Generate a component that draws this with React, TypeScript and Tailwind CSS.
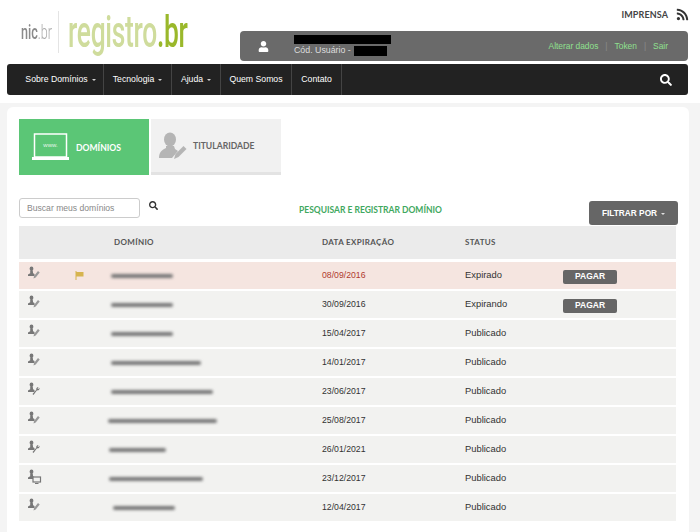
import React from 'react';
import { FaRss, FaSearch, FaUser } from 'react-icons/fa';

const menu = [
  { label: 'Sobre Domínios', caret: true, w: 'w-[97px] pl-[11px]' },
  { label: 'Tecnologia', caret: true, w: 'w-[68px]' },
  { label: 'Ajuda', caret: true, w: 'w-[49px]' },
  { label: 'Quem Somos', caret: false, w: 'w-[71px]' },
  { label: 'Contato', caret: false, w: 'w-[50px]' },
];

type Row = {
  date: string;
  status: string;
  blur: number;
  start: number;
  icon: 'pencil' | 'wrench' | 'screen';
  expired?: boolean;
  pay?: boolean;
};

const rows: Row[] = [
  { date: '08/09/2016', status: 'Expirado', blur: 62, start: -3, icon: 'pencil', expired: true, pay: true },
  { date: '30/09/2016', status: 'Expirando', blur: 62, start: -3, icon: 'pencil', pay: true },
  { date: '15/04/2017', status: 'Publicado', blur: 62, start: -3, icon: 'pencil' },
  { date: '14/01/2017', status: 'Publicado', blur: 90, start: -3, icon: 'pencil' },
  { date: '23/06/2017', status: 'Publicado', blur: 102, start: -3, icon: 'wrench' },
  { date: '25/08/2017', status: 'Publicado', blur: 109, start: -6, icon: 'pencil' },
  { date: '26/01/2021', status: 'Publicado', blur: 57, start: -5, icon: 'wrench' },
  { date: '23/12/2017', status: 'Publicado', blur: 94, start: -5, icon: 'screen' },
  { date: '12/04/2017', status: 'Publicado', blur: 62, start: -1, icon: 'pencil' },
];

const Caret = () => (
  <span className="inline-block ml-[4px] align-middle border-x-[2px] border-t-[2px] border-x-transparent border-t-current opacity-80" />
);

const RowIcon = ({ type }: { type: Row['icon'] }) => (
  <svg className="mt-[-3px]" width="16" height="16" viewBox="0 0 16 16" fill="#777">
    <ellipse cx="5.500" cy="2.800" rx="1.900" ry="2.400" />
    <path d="M4.200 5h2.600l.3 2.200 1.400.8v2H2v-1.400l2.200-1.400z" />
    {type === 'pencil' && <path d="M7.500 12.500l.5-2.400 4-5 1.700 1.400-4 5z" fill="#999" />}
    {type === 'wrench' && <path d="M7.500 13l-1-1 3.800-4.300c-.4-1.400.6-3 2.400-2.800l-1.200 1.300.8.8 1.300-1.200c.2 1.800-1.200 3-2.600 2.500z" />}
    {type === 'screen' && (
      <>
        <rect x="7" y="8" width="7.500" height="5" fill="#f2f2f0" stroke="#777" strokeWidth="1.200" />
        <path d="M9 14h3.500v1h-3.500z" />
      </>
    )}
  </svg>
);

export default function App() {
  return (
    <div className="w-[700px] h-[532px] overflow-hidden bg-white font-['Liberation_Sans',sans-serif]">
      {/* Header */}
      <header className="relative h-[64px] px-[7px] pr-[12px]">
        <div className="absolute left-[21px] top-[9px] flex items-center">
          <span className="w-[28px] text-[21px] leading-[32px] text-[#8a8a8a] font-['Roboto',sans-serif] font-medium scale-x-[0.6] origin-left whitespace-nowrap">
            nic<span className="font-light text-[#aaa]">.br</span>
          </span>
          <span className="ml-[9px] w-px h-[42px] bg-[#e4e4e4]" />
          <span className="ml-[9px] text-[44px] leading-[46px] font-['Roboto',sans-serif] font-medium text-[#cfdc9c] scale-x-[0.6] origin-left whitespace-nowrap tracking-[-0.5px]">
            registro<span className="text-[#9ab82b]">.br</span>
          </span>
        </div>

        <div className="absolute right-[11px] top-[8px] flex items-center">
          <span className="text-[9px] font-bold tracking-[0.1px] text-[#444] font-['Lato',sans-serif]">IMPRENSA</span>
          <FaRss className="ml-[8px] text-[#333] text-[13px]" />
        </div>

        <div className="absolute left-[240px] top-[31px] w-[448px] h-[30px] rounded-[4px] bg-[#6a6a6a] flex items-center">
          <FaUser className="ml-[18px] text-white text-[11px]" />
          <div className="ml-[25px] flex flex-col">
            <div className="w-[97px] h-[9px] bg-black" />
            <div className="flex items-center h-[13px] text-[8.800px] text-[#ddd]">
              Cód. Usuário -<span className="ml-[3px] w-[33px] h-[10px] bg-black" />
            </div>
          </div>
          <div className="ml-auto mr-[20px] flex items-center text-[8.400px] text-[#8fe08f]">
            <span>Alterar dados</span>
            <span className="mx-[7px] text-[#8a8a8a]">|</span>
            <span>Token</span>
            <span className="mx-[7px] text-[#8a8a8a]">|</span>
            <span>Sair</span>
          </div>
        </div>
      </header>

      {/* Nav */}
      <nav className="mx-[7px] w-[681px] h-[31px] rounded-[3px] bg-[#222] flex items-stretch text-white text-[8.700px]">
        {menu.map((m) => (
          <div key={m.label} className={`${m.w} flex items-center justify-center border-r border-[#444] whitespace-nowrap`}>
            {m.label}
            {m.caret && <Caret />}
          </div>
        ))}
        <FaSearch className="ml-auto mr-[16px] self-center text-white text-[12px]" />
      </nav>

      {/* Card */}
      <div className="bg-[#f4f4f4] mt-[8px] pt-[4px] h-[437px]">
        <main className="ml-[7px] w-[682px] h-[433px] rounded-[6px] bg-white px-[12px] pt-[12px]">
          <div className="flex gap-[2px]">
            <div className="w-[130px] h-[56px] bg-[#5bc676] flex items-center text-white">
              <svg className="ml-[13px]" width="38" height="28" viewBox="0 0 38 28">
                <rect x="2.500" y="1" width="32" height="23" fill="none" stroke="#fff" strokeWidth="1.500" />
                <rect x="0" y="24" width="37" height="3" fill="#fff" />
                <text x="18.500" y="14" textAnchor="middle" fontSize="6" fill="#e4f5e8" fontFamily="Liberation Sans">www.</text>
              </svg>
              <span className="ml-[6px] mt-[2px] text-[8.600px] font-bold font-['Lato',sans-serif]">DOMÍNIOS</span>
            </div>
            <div className="w-[130px] h-[56px] bg-[#f1f1f1] border-b-[3px] border-[#e3e3e3] flex items-center">
              <svg className="ml-[6px]" width="30" height="30" viewBox="0 0 30 30" fill="#b5b5b5">
                <ellipse cx="13" cy="8.500" rx="6" ry="7" />
                <path d="M9 15h8l1 3 3 2-6 7H2c0-6 3-8 7-10z" />
                <path d="M17 28l1.500-5 8-8 3 3-8 8z" />
              </svg>
              <span className="ml-[6px] mt-[2px] text-[8.600px] font-bold font-['Lato',sans-serif] text-[#666]">TITULARIDADE</span>
            </div>
          </div>

          <div className="relative h-[51px]">
            <input
              readOnly
              placeholder="Buscar meus domínios"
              className="absolute left-0 top-[23px] w-[121px] h-[20px] rounded-[3px] border border-[#ccc] px-[7px] text-[8.600px] outline-none placeholder:text-[#888]"
            />
            <FaSearch className="absolute left-[130px] top-[26px] text-[#333] text-[9px]" />
            <span className="absolute left-[280px] top-[29px] text-[8.500px] font-bold font-['Lato',sans-serif] text-[#3fa860] whitespace-nowrap">
              PESQUISAR E REGISTRAR DOMÍNIO
            </span>
            <button className="absolute left-[570px] top-[26px] w-[89px] h-[24px] rounded-[3px] bg-[#666] text-white text-[8.300px] font-bold z-10">
              FILTRAR POR
              <Caret />
            </button>
          </div>

          <div className="w-[657px]">
            <div className="relative h-[33px] bg-[#ebebeb] mb-[3px] text-[8px] font-bold font-['Lato',sans-serif] text-[#555] tracking-[0.35px]">
              <span className="absolute left-[95px] top-[10px]">DOMÍNIO</span>
              <span className="absolute left-[303px] top-[10px]">DATA EXPIRAÇÃO</span>
              <span className="absolute left-[446px] top-[10px]">STATUS</span>
            </div>
            <div className="flex flex-col gap-[2px]">
              {rows.map((r) => (
                <div
                  key={r.date}
                  className={`h-[27px] flex items-center text-[9.400px] text-[#333] ${r.expired ? 'bg-[#f5e5e0]' : 'bg-[#f2f2f0]'}`}
                >
                  <div className="w-[95px] pl-[7px] flex items-center">
                    <RowIcon type={r.icon} />
                    {r.expired && (
                      <svg className="ml-[33px]" width="9" height="9" viewBox="0 0 9 9" fill="#d6b44f">
                        <path d="M0.500 0h1v9h-1zM1.500 1h7v4.500h-7z" />
                      </svg>
                    )}
                  </div>
                  <div className="w-[208px]">
                    <div
                      className="h-[4px] rounded-full bg-[#777] blur-[1.500px]"
                      style={{ width: r.blur, marginLeft: r.start }}
                    />
                  </div>
                  <div className={`w-[143px] text-[8.700px] ${r.expired ? 'text-[#b03a2e]' : ''}`}>{r.date}</div>
                  <div className="w-[98px]">{r.status}</div>
                  {r.pay && (
                    <button className="w-[54px] h-[14px] mt-[2px] rounded-[2px] bg-[#666] text-white text-[8.500px] font-bold">
                      PAGAR
                    </button>
                  )}
                </div>
              ))}
            </div>
          </div>
        </main>
      </div>
    </div>
  );
}
